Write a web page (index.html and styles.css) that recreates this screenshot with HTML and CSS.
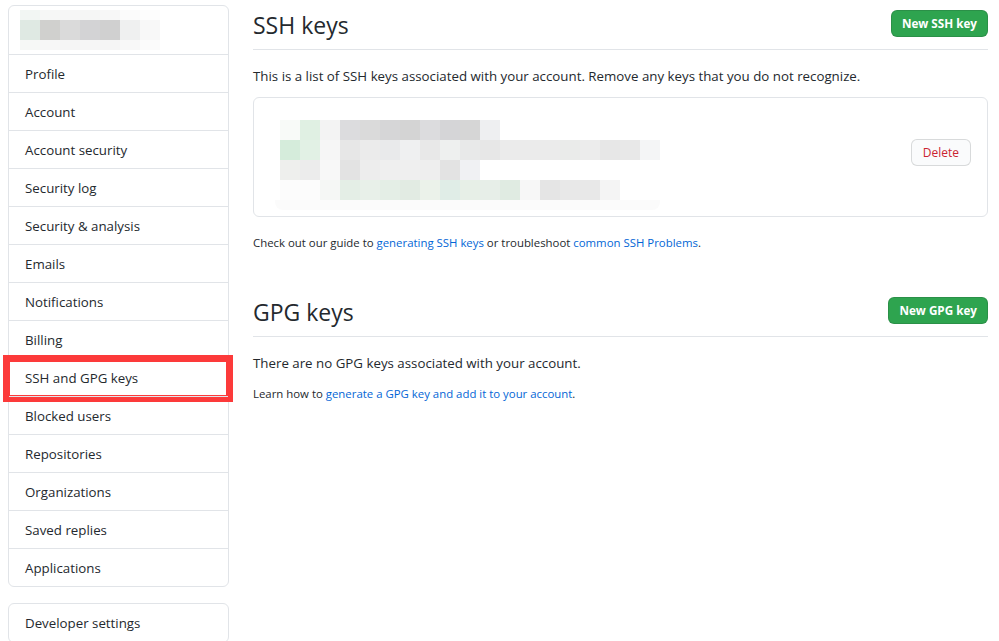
FILE: index.html
```html
<!DOCTYPE html>
<html>
<head>
<meta charset="utf-8">
<title>SSH and GPG keys</title>
<link rel="stylesheet" href="styles.css">
</head>
<body>
<div class="page">

	<div class="sidebar">
		<div class="menu">
			<div class="menu-head">
				<div class="blur">
					<div class="px px-a"></div>
					<div class="px px-b"></div>
					<div class="px px-c"></div>
				</div>
			</div>
			<a class="menu-item" href="#">Profile</a>
			<a class="menu-item" href="#">Account</a>
			<a class="menu-item" href="#">Account security</a>
			<a class="menu-item" href="#">Security log</a>
			<a class="menu-item" href="#">Security &amp; analysis</a>
			<a class="menu-item" href="#">Emails</a>
			<a class="menu-item" href="#">Notifications</a>
			<a class="menu-item" href="#">Billing</a>
			<a class="menu-item selected" href="#">SSH and GPG keys<span class="mark"></span></a>
			<a class="menu-item" href="#">Blocked users</a>
			<a class="menu-item" href="#">Repositories</a>
			<a class="menu-item" href="#">Organizations</a>
			<a class="menu-item" href="#">Saved replies</a>
			<a class="menu-item" href="#">Applications</a>
		</div>
		<div class="menu dev">
			<a class="menu-item first" href="#">Developer settings</a>
		</div>
	</div>

	<div class="main">
		<div class="subhead">
			<h2>SSH keys</h2>
			<a class="btn-green" href="#">New SSH key</a>
		</div>
		<p class="lead">This is a list of SSH keys associated with your account. Remove any keys that you do not recognize.</p>

		<div class="keybox">
			<div class="keyinfo">
				<div class="kp kp-1"></div>
				<div class="kp kp-2"></div>
				<div class="kp kp-3"></div>
				<div class="kp kp-4"></div>
				<div class="kp kp-fade"></div>
			</div>
			<a class="btn-delete" href="#">Delete</a>
		</div>

		<p class="note">Check out our guide to <a href="#">generating SSH keys</a> or troubleshoot <a href="#">common SSH Problems</a>.</p>

		<div class="subhead gpg">
			<h2>GPG keys</h2>
			<a class="btn-green" href="#">New GPG key</a>
		</div>
		<p class="lead">There are no GPG keys associated with your account.</p>
		<p class="note small-gap">Learn how to <a href="#">generate a GPG key and add it to your account</a>.</p>
	</div>

</div>
</body>
</html>
```

FILE: styles.css
```css
body{
	margin: 0;
	font-family: "Open Sans", "Noto Sans", sans-serif;
	font-size: 13.3px;
	color: #24292e;
	background: #fff;
}
a{
	text-decoration: none;
}
.page{
	display: flex;
	align-items: flex-start;
	padding-top: 5px;
}

/* left menu */
.sidebar{
	width: 221px;
	margin-left: 8px;
}
.menu{
	border: 1px solid #e1e4e8;
	border-radius: 6px;
	background: #fff;
}
.menu-head{
	height: 48px;
	padding: 4px 0 0 11px;
	box-sizing: border-box;
}
.blur{
	width: 140px;
	filter: blur(0.4px);
}
.px-a{
	height: 10px;
	background: linear-gradient(to right, #f2f6f3 0 20px, #f6f7f6 20px 40px, #f6f6f6 40px 60px, #f5f6f5 60px 80px, #f7f7f7 80px 100px, #fbfbfb 100px 120px, #fdfdfd 120px 140px);
}
.px-b{
	height: 20px;
	background: linear-gradient(to right, #dfe9e3 0 20px, #d0d0ce 20px 40px, #dadada 40px 60px, #d3d3d5 60px 80px, #d0d0d0 80px 100px, #eff0f0 100px 120px, #f8f8f8 120px 140px);
}
.px-c{
	height: 10px;
	background: linear-gradient(to right, #f6f8f6 0 20px, #f7f7f7 20px 40px, #f5f5f5 40px 60px, #f6f6f6 60px 80px, #f5f5f5 80px 100px, #f8f8f8 100px 120px, #fbfbfb 120px 140px);
}
.menu-item{
	display: block;
	position: relative;
	height: 38px;
	line-height: 38px;
	padding-left: 16px;
	box-sizing: border-box;
	border-top: 1px solid #e1e4e8;
	color: #24292e;
}
.menu-item.first{
	border-top: none;
}
.dev{
	margin-top: 16px;
}
.mark{
	position: absolute;
	left: -6px;
	top: -4px;
	width: 230px;
	height: 47px;
	border: 7px solid #fc3a3a;
	box-sizing: border-box;
}

/* right side */
.main{
	width: 735px;
	margin-left: 24px;
	margin-top: -5px;
}
.subhead{
	display: flex;
	justify-content: space-between;
	align-items: flex-start;
	padding: 10px 0 9px;
	border-bottom: 1px solid #e1e4e8;
}
.subhead.gpg{
	margin-top: 35px;
}
h2{
	margin: 0;
	font-size: 23px;
	font-weight: normal;
	line-height: 30px;
}
.btn-green{
	height: 27px;
	line-height: 25px;
	padding: 0 10px;
	box-sizing: border-box;
	background: #2ea44f;
	color: #fff;
	font-size: 11.7px;
	font-weight: bold;
	border: 1px solid rgba(27,31,35,0.15);
	border-radius: 6px;
}
.lead{
	margin: 16px 0 10px;
	line-height: 21px;
}
.keybox{
	display: flex;
	justify-content: space-between;
	align-items: flex-start;
	padding: 22px 16px 6px 26px;
	border: 1px solid #e1e4e8;
	border-radius: 6px;
}
.keyinfo{
	width: 390px;
	filter: blur(0.3px);
}
.kp{
	height: 20px;
}
.kp-1{
	background: linear-gradient(to right, #f8faf8 0 20px, #e0f0e3 20px 40px, #f3f3f3 40px 60px, #dcdcde 60px 80px, #dadada 80px 100px, #d6d6d7 100px 120px, #d4d4d4 120px 140px, #dcdcde 140px 160px, #d5d5d7 160px 180px, #d6d6d6 180px 200px, #eeeff1 200px 220px, transparent 220px);
}
.kp-2{
	background: linear-gradient(to right, #d5ecdb 0 20px, #e2f1e5 20px 40px, #f6f6f6 40px 60px, #e7e7e7 60px 80px, #ebebeb 80px 100px, #e9eaeb 100px 120px, #eff0f1 120px 140px, #e8e8e8 140px 160px, #eef0ef 160px 180px, #e8e9e9 180px 200px, #e7e7e7 200px 220px, #ebebeb 220px 280px, #eaebea 280px 300px, #ececec 300px 320px, #e7e7e7 320px 340px, #e8e8e8 340px 360px, #f4f5f6 360px 380px, transparent 380px);
}
.kp-3{
	background: linear-gradient(to right, #eeefed 0 20px, #ececec 20px 40px, #f8f8f8 40px 60px, #e3e3e3 60px 80px, #ededed 80px 100px, #efefef 100px 140px, #eeeeee 140px 160px, #e3e3e3 160px 180px, #f0f1f3 180px 200px, transparent 200px);
}
.kp-4{
	background: linear-gradient(to right, #fcfcfc 0 40px, #f5f7f5 40px 60px, #e4eee6 60px 80px, #e8f0e9 80px 100px, #e4eee6 100px 120px, #e2ebe3 120px 140px, #ebf2ea 140px 160px, #e0ede7 160px 180px, #e7efe7 180px 200px, #e7eee8 200px 220px, #e0ebe2 220px 240px, #f7f7f7 240px 260px, #e5e5e5 260px 280px, #e8e8e8 280px 320px, #f4f4f4 320px 340px, transparent 340px);
}
.kp-fade{
	height: 10px;
	width: 385px;
	margin-left: -5px;
	border-radius: 0 0 8px 8px;
	background: #fbfbfb;
}
.btn-delete{
	margin-top: 19px;
	height: 27px;
	line-height: 25px;
	padding: 0 11px;
	box-sizing: border-box;
	background: #fafbfc;
	color: #cb2431;
	font-size: 12px;
	border: 1px solid rgba(27,31,35,0.15);
	border-radius: 6px;
}
.note{
	margin: 17px 0 0;
	font-size: 11.4px;
	line-height: 18px;
}
.note a{
	color: #0366d6;
}
.small-gap{
	margin-top: 11px;
}
```
